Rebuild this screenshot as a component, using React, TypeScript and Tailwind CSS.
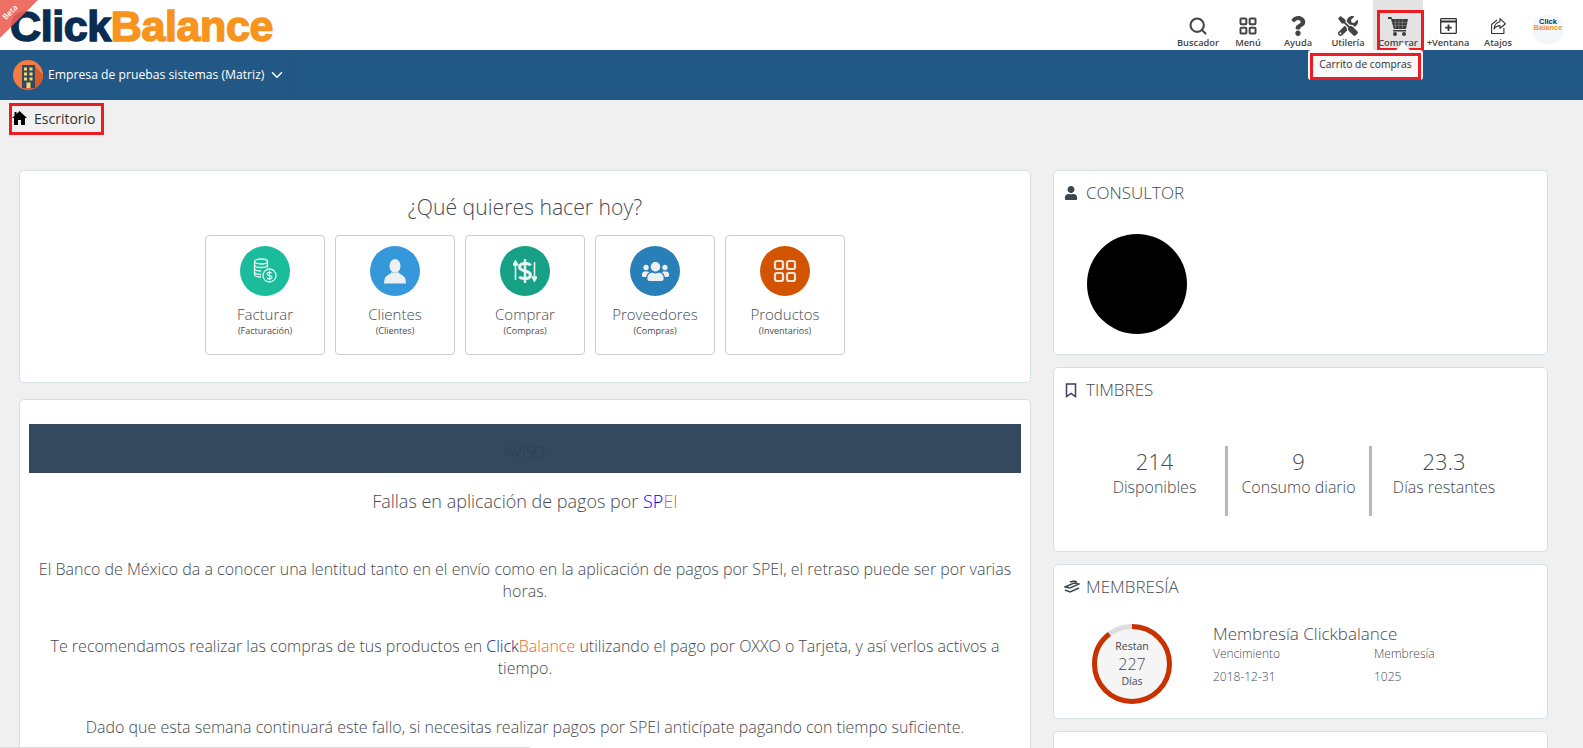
import { ChevronDown, LayoutGrid, Search } from "lucide-react";
import { FaQuestion, FaTools, FaUser, FaUsers } from "react-icons/fa";

const sans = "font-['Open_Sans',sans-serif]";

const CartIcon = () => (
  <svg width="22" height="22" viewBox="0 0 22 22" fill="#3c3c3c">
    <path d="M1 2h3.500l.6 2H21l-2 10H6.800L4 4H1z" />
    <path d="M8.500 4.500v9M12 4.500v9M15.500 4.500v9M5.500 7.500h15M6.300 10.500h13.600" stroke="#8a8a8a" strokeWidth="0.6" />
    <path d="M6 15h13v1.500H6z" />
    <circle cx="8" cy="19" r="2" />
    <circle cx="17" cy="19" r="2" />
  </svg>
);

const WindowIcon = () => (
  <svg width="17" height="16" viewBox="0 0 17 16" fill="none" stroke="#333" strokeWidth="1.300">
    <rect x="0.700" y="0.700" width="15.600" height="14.600" rx="0.500" />
    <path d="M1 3.500h15" strokeWidth="2" />
    <path d="M8.500 6.500v6.500M5.200 9.700h6.600" strokeWidth="1.800" />
  </svg>
);

const ShortcutIcon = () => (
  <svg width="15" height="16" viewBox="0 0 15 16" fill="none" stroke="#333" strokeWidth="1.100" strokeLinejoin="round">
    <path d="M6 2 .6 6.500v9h12.300V10" />
    <path d="M9 .6 14.500 5.800 9 10.300V7.600C6.500 7.600 4.500 8.800 3 11c.4-4 2.800-6.800 6-7.300z" fill="#fff" />
  </svg>
);

const HomeIcon = () => (
  <svg width="15" height="14" viewBox="0 0 15 14" fill="#000">
    <path d="M7.500 0 15 7h-2v7H9V9H6v5H2V7H0l2.500-2.300V1h2v1.900z" />
  </svg>
);

const BustIcon = () => (
  <svg width="24" height="26" viewBox="0 0 24 26" fill="#ecf0f1">
    <ellipse cx="12" cy="8" rx="5.500" ry="7" />
    <path d="M8.500 14c-.3 2-5.500 3.500-6.500 6-.6 1.500-.8 3.500-1 5.500h22c-.2-2-.4-4-1-5.500-1-2.500-6.200-4-6.500-6-1 1.500-6 1.500-7 0z" />
  </svg>
);

const CoinsIcon = () => (
  <svg width="24" height="26" viewBox="0 0 24 26" fill="none" stroke="#fff" strokeWidth="1.300" opacity="0.9">
    <ellipse cx="8" cy="3.500" rx="6.500" ry="2.500" />
    <path d="M1.500 3.500v13c0 1.400 2.900 2.500 6.500 2.500M14.500 3.500v6" />
    <path d="M1.500 7c0 1.400 2.900 2.500 6.500 2.500s6.500-1.100 6.500-2.500M1.500 10.500c0 1.400 2.900 2.500 6.500 2.500M1.500 14c0 1.400 2.900 2.500 6.500 2.500" />
    <circle cx="16.500" cy="17.500" r="6.500" />
    <path d="M18.800 15.200c-.5-1-3.200-1.400-4.200-.3-1.100 1.300 0 2.300 2 2.700 2 .4 3 1.400 1.900 2.700-1 1-3.700.7-4.300-.4M16.500 12.800v9.400" strokeWidth="1.200" />
  </svg>
);

const DollarArrowsIcon = () => (
  <svg width="24" height="26" viewBox="0 0 24 26" fill="none" stroke="#e6f5f0">
    <path d="M17.500 7.500c-1-2.500-9-3-10.500 0-1.500 3.500 1.500 4.500 5 5.500 3.500 1 6.500 2 5 5.500-1.500 3-9.500 2.500-10.500 0" strokeWidth="3" />
    <path d="M12 1v24" strokeWidth="2.500" />
    <path d="M2.500 22V6M2.500 3l-2.300 4h4.600zM21.500 4v16M21.500 23l-2.300-4h4.600z" strokeWidth="1.600" fill="#e6f5f0" />
  </svg>
);

const GridIcon = () => (
  <svg width="24" height="24" viewBox="0 0 24 24" fill="none" stroke="#f1e4dc" strokeWidth="2.200">
    <rect x="2" y="2" width="8" height="8" rx="2" />
    <rect x="14" y="2" width="8" height="8" rx="2" />
    <rect x="2" y="14" width="8" height="8" rx="2" />
    <rect x="14" y="14" width="8" height="8" rx="2" />
  </svg>
);

const toolbar = [
  { label: "Buscador", icon: <Search size={20} strokeWidth={2.5} color="#444" /> },
  { label: "Menú", icon: <LayoutGrid size={20} strokeWidth={2.4} color="#444" /> },
  { label: "Ayuda", icon: <FaQuestion size={20} color="#444" /> },
  { label: "Utilería", icon: <FaTools size={20} color="#444" /> },
  { label: "Comprar", icon: <CartIcon />, active: true },
  { label: "+Ventana", icon: <WindowIcon /> },
  { label: "Atajos", icon: <ShortcutIcon /> },
];

const tiles = [
  { title: "Facturar", sub: "(Facturación)", bg: "bg-[#1abc9c]", icon: <CoinsIcon /> },
  { title: "Clientes", sub: "(Clientes)", bg: "bg-[#3498db]", icon: <BustIcon /> },
  { title: "Comprar", sub: "(Compras)", bg: "bg-[#16a085]", icon: <DollarArrowsIcon /> },
  { title: "Proveedores", sub: "(Compras)", bg: "bg-[#2980b9]", icon: <FaUsers size={27} color="#ecf0f1" /> },
  { title: "Productos", sub: "(Inventarios)", bg: "bg-[#d35400]", icon: <GridIcon /> },
];

const timbres = [
  { value: "214", label: "Disponibles" },
  { value: "9", label: "Consumo diario" },
  { value: "23.3", label: "Días restantes" },
];

const cardClass = "rounded-[5px] border border-[#d5dfe6] bg-white";

const App = () => {
  return (
    <div className={`${sans} relative h-[748px] w-[1583px] overflow-hidden bg-[#f0f0f0] text-[#464a50]`}>
      <header className="flex h-[50px] items-start justify-between bg-white">
        <div className="ml-[10px] mt-[1px] font-['Liberation_Sans',sans-serif] text-[43px] leading-[50px] font-bold tracking-[-0.4px]">
          <span className="text-[#0b2d52] [-webkit-text-stroke:1.5px_#0b2d52]">Click</span>
          <span className="text-[#f7941d] [-webkit-text-stroke:1.5px_#f7941d]">Balance</span>
        </div>
        <div className="mr-[10px] flex">
          {toolbar.map((item) => (
            <div
              key={item.label}
              className={`flex h-[50px] w-[50px] flex-col items-center ${item.active ? "bg-[#e3e3e3]" : ""}`}
            >
              <div className="mt-[15px] flex h-[22px] items-center justify-center">{item.icon}</div>
              <span className="text-[9.300px] leading-[12px] font-semibold whitespace-nowrap text-[#444]">
                {item.label}
              </span>
            </div>
          ))}
          <div className="flex h-[50px] w-[50px] items-start justify-center pt-[15px]">
            <div className="flex h-[29px] w-[32px] flex-col items-center rounded-full bg-[#f4f7fa] font-['Liberation_Sans',sans-serif] text-[7.500px] leading-[6px] font-bold">
              <span className="mt-[4px] text-[#0b2d52]">Click</span>
              <span className="text-[#f7941d]">Balance</span>
            </div>
          </div>
        </div>
      </header>

      <div className="flex h-[50px] items-center bg-[#225885]">
        <div className="flex h-full w-[291px] items-center border-r border-[#20527c] pl-[13px]">
          <svg width="30" height="30" viewBox="0 0 30 30" className="shrink-0">
            <circle cx="15" cy="15" r="15" fill="#f47b42" />
            <path d="M21 5 30 15a15 15 0 0 1-15 15L9 28z" fill="#db5a2c" />
            <rect x="9" y="5" width="13" height="23" fill="#34495e" />
            <path d="M11 7.500h3v3h-3zM16.500 7.500h3v3h-3zM11 12.500h3v3h-3zM16.500 12.500h3v3h-3zM11 17.500h3v3h-3zM16.500 17.500h3v3h-3zM13.500 22.500h4V28h-4z" fill="#f5d76e" />
          </svg>
          <span className="ml-[5px] text-[12.200px] font-medium whitespace-nowrap text-white">
            Empresa de pruebas sistemas (Matriz)
          </span>
          <ChevronDown size={18} strokeWidth={2} color="#fff" className="ml-[4px] shrink-0" />
        </div>
      </div>

      <div className="ml-[9px] mt-[3px] flex h-[32px] w-[95px] items-center border-[3px] border-[#ed1c24] pb-[2px]">
        <HomeIcon />
        <span className="ml-[7px] text-[14px] text-[#333]">Escritorio</span>
      </div>

      <main className="ml-[19px] mt-[35px] flex items-start gap-[22px]">
        <div className="flex w-[1012px] shrink-0 flex-col gap-[16px]">
          <section className={`${cardClass} h-[213px] pt-[20px]`}>
            <h2 className="text-center text-[21.200px] leading-[32px] font-light">¿Qué quieres hacer hoy?</h2>
            <div className="mt-[12px] flex justify-center gap-[10px]">
              {tiles.map((tile) => (
                <div
                  key={tile.title}
                  className="flex h-[120px] w-[120px] flex-col items-center rounded-[4px] border border-[#cccccc] pt-[10px]"
                >
                  <div className={`flex h-[50px] w-[50px] items-center justify-center rounded-full ${tile.bg}`}>
                    {tile.icon}
                  </div>
                  <div className="mt-[7px] text-[15px] leading-[22px] font-light">{tile.title}</div>
                  <div className="text-[9px] leading-[12px]">{tile.sub}</div>
                </div>
              ))}
            </div>
          </section>

          <section className="h-[400px] rounded-[5px] border border-[#dddddd] bg-white px-[9px] pt-[24px] text-center">
            <div className="flex h-[49px] items-center justify-center bg-[#34495e] pt-[6px] text-[15px] font-light text-[#2f3e4f]">
              AVISO
            </div>
            <p className="mt-[16px] text-[18px] leading-[24px] font-light">
              Fallas en aplicación de pagos por <span className="text-[#0000ff]">SP</span>
              <span className="text-[#f26522]">EI</span>
            </p>
            <p className="mx-auto mt-[45px] w-[980px] text-[16px] leading-[22px] font-light">
              El Banco de México da a conocer una lentitud tanto en el envío como en la aplicación de pagos por SPEI, el retraso puede ser por varias horas.
            </p>
            <p className="mx-auto mt-[33px] w-[980px] text-[16px] leading-[22px] font-light">
              Te recomendamos realizar las compras de tus productos en <span className="text-[#0b2d82]">Click</span>
              <span className="text-[#f26522]">Balance</span> utilizando el pago por OXXO o Tarjeta, y así verlos activos a tiempo.
            </p>
            <p className="mx-auto mt-[37px] w-[980px] text-[16px] leading-[22px] font-light">
              Dado que esta semana continuará este fallo, si necesitas realizar pagos por SPEI anticípate pagando con tiempo suficiente.
            </p>
          </section>
        </div>

        <div className="flex w-[495px] shrink-0 flex-col gap-[12px]">
          <section className={`${cardClass} h-[185px] px-[10px] pt-[11px]`}>
            <div className="flex items-center">
              <FaUser size={14} color="#3d464f" />
              <span className="ml-[8px] text-[17px] leading-[22px] font-light">CONSULTOR</span>
            </div>
            <div className="ml-[23px] mt-[30px] h-[100px] w-[100px] rounded-full bg-black" />
          </section>

          <section className={`${cardClass} h-[185px] px-[10px] pt-[11px]`}>
            <div className="flex items-center">
              <svg width="14" height="15" viewBox="0 0 14 15" fill="none" stroke="#3d3f5c" strokeWidth="1.500">
                <path d="M2.500 1h9v12.500L7 10.500l-4.500 3z" />
              </svg>
              <span className="ml-[8px] text-[17px] leading-[22px] font-light">TIMBRES</span>
            </div>
            <div className="ml-[20px] mt-[45px] flex h-[70px]">
              {timbres.map((item, index) => (
                <div
                  key={item.label}
                  className={`flex w-[144px] flex-col items-center ${index < 2 ? "border-r-[3px] border-[#b8b8b8]" : ""}`}
                >
                  <div className="text-[22px] leading-[31px] font-light">{item.value}</div>
                  <div className="text-[16px] leading-[20px] font-light">{item.label}</div>
                </div>
              ))}
            </div>
          </section>

          <section className={`${cardClass} h-[155px] px-[10px] pt-[11px]`}>
            <div className="flex items-center">
              <svg width="16" height="14" viewBox="0 0 16 14" fill="none" stroke="#3d464f" strokeWidth="1.400">
                <path d="M1 7l9-4 5 1-9 4zM1 10l5 2 9-4M6 2l4-1 3 1" />
              </svg>
              <span className="ml-[6px] text-[17px] leading-[22px] font-light">MEMBRESÍA</span>
            </div>
            <div className="mt-[26px] flex">
              <div className="relative ml-[28px] h-[80px] w-[80px] shrink-0">
                <svg width="80" height="80" viewBox="0 0 80 80">
                  <circle cx="40" cy="40" r="37.500" fill="#f5f5f5" stroke="#dddddd" strokeWidth="5" />
                  <circle
                    cx="40"
                    cy="40"
                    r="37.500"
                    fill="none"
                    stroke="#c93100"
                    strokeWidth="5"
                    strokeDasharray="211 236"
                    transform="rotate(-90 40 40)"
                  />
                </svg>
                <div className="absolute inset-0 flex flex-col items-center justify-center text-[10.500px] leading-[17px]">
                  <span>Restan</span>
                  <span className="text-[16px] leading-[18px] font-light">227</span>
                  <span>Días</span>
                </div>
              </div>
              <div className="ml-[41px] w-[300px]">
                <div className="mt-[-1px] text-[17px] leading-[22px] font-light">Membresía Clickbalance</div>
                <div className="grid grid-cols-[161px_1fr] text-[12px] font-light">
                  <div className="leading-[18px]">Vencimiento</div>
                  <div className="leading-[18px]">Membresía</div>
                  <div className="mt-[5px] leading-[18px]">2018-12-31</div>
                  <div className="mt-[5px] leading-[18px]">1025</div>
                </div>
              </div>
            </div>
          </section>

          <section className={`${cardClass} h-[60px]`} />
        </div>
      </main>

      {/* beta ribbon */}
      <div className="absolute left-0 top-0 h-[38px] w-[38px] bg-[#eb5f55]/90 [clip-path:polygon(0_0,100%_0,0_100%)]" />
      <span className="absolute left-[1px] top-[7px] -rotate-45 text-[8px] leading-[10px] font-semibold text-white">Beta</span>

      {/* tutorial highlight over Comprar */}
      <div className="absolute left-[1377px] top-[10px] h-[41px] w-[47px] border-[3px] border-[#ed1c24]" />
      <div className="absolute left-[1308px] top-[50px] flex h-[30px] w-[115px] items-center justify-center rounded-[3px] bg-[#f8f8f8] text-[10.300px] font-medium text-[#333]">
        Carrito de compras
        <div className="absolute left-[2px] top-[3px] h-[27px] w-[111px] border-[3px] border-[#ed1c24]" />
      </div>
      <div className="absolute left-[1396px] top-[42px] h-0 w-0 border-x-[7px] border-b-[8px] border-x-transparent border-b-[#f8f8f8]" />

      {/* bottom scroll strip */}
      <div className="absolute bottom-0 left-0 h-[1px] w-[530px] bg-[#dcdcdc]" />
    </div>
  );
};

export default App;
